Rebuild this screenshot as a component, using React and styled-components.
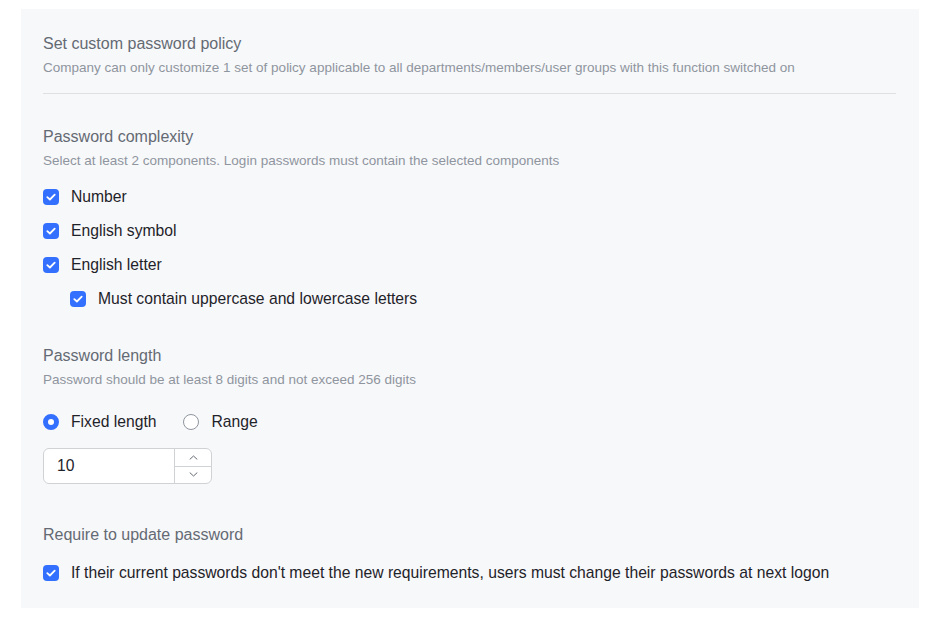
import React, { useState } from 'react';
import styled, { createGlobalStyle } from 'styled-components';

const GlobalStyle = createGlobalStyle`
  body {
    margin: 0;
    background: #ffffff;
    font-family: "Liberation Sans", Arial, sans-serif;
  }
`;

const Page = styled.div`
  padding: 9px 28px 16px 21px;
`;

const Panel = styled.div`
  background: #f7f8fa;
  padding: 24px 23px 18px 22px;
`;

const Header = styled.div`
  padding-bottom: 15px;
  border-bottom: 1px solid #dee0e3;
`;

const Title = styled.div`
  font-size: 16px;
  line-height: 22px;
  color: #646a73;
`;

const Desc = styled.div`
  font-size: 13.5px;
  line-height: 20px;
  color: #8f959e;
  margin-top: 3px;
`;

const Section = styled.div`
  margin-top: ${props => props.gap || 0}px;
`;

const OptionList = styled.div`
  display: flex;
  flex-direction: column;
  margin-top: ${props => props.gap ?? 9}px;
`;

const CheckRow = styled.label`
  display: flex;
  align-items: center;
  gap: 12px;
  height: 34px;
  padding-left: ${props => (props.indent ? 27 : 0)}px;
  font-size: 15.7px;
  color: #1f2329;
  cursor: pointer;
`;

const Box = styled.span`
  width: 16px;
  height: 16px;
  border-radius: 4px;
  flex-shrink: 0;
  display: flex;
  align-items: center;
  justify-content: center;
  background: ${props => (props.checked ? '#3370ff' : '#ffffff')};
  border: ${props => (props.checked ? 'none' : '1px solid #bbbfc4')};
  box-sizing: border-box;
`;

const RadioGroup = styled.div`
  display: flex;
  align-items: center;
  gap: 27px;
  margin-top: 21px;
  height: 22px;
`;

const RadioItem = styled.label`
  display: flex;
  align-items: center;
  gap: 12px;
  font-size: 15.7px;
  color: #1f2329;
  cursor: pointer;
`;

const RadioDot = styled.span`
  width: 16px;
  height: 16px;
  border-radius: 50%;
  box-sizing: border-box;
  background: #ffffff;
  border: ${props => (props.checked ? '5px solid #3370ff' : '1px solid #8f959e')};
`;

const NumberBox = styled.div`
  display: flex;
  width: 169px;
  height: 36px;
  margin-top: 15px;
  box-sizing: border-box;
  border: 1px solid #d0d3d6;
  border-radius: 6px;
  background: #ffffff;
  overflow: hidden;
`;

const NumberValue = styled.div`
  flex: 1;
  display: flex;
  align-items: center;
  padding-left: 13px;
  font-size: 15.7px;
  color: #1f2329;
`;

const Stepper = styled.div`
  width: 36px;
  display: flex;
  flex-direction: column;
  border-left: 1px solid #d0d3d6;
`;

const StepButton = styled.button`
  flex: 1;
  border: none;
  background: transparent;
  padding: 0;
  display: flex;
  align-items: center;
  justify-content: center;
  cursor: pointer;
  & + & {
    border-top: 1px solid #d0d3d6;
  }
`;

const Tick = () => (
  <svg width="10" height="8" viewBox="0 0 10 8" fill="none">
    <path d="M1.3 4.1 3.9 6.5 8.7 1.6" stroke="#fff" strokeWidth="1.8" strokeLinecap="round" strokeLinejoin="round" />
  </svg>
);

const Chevron = ({ up }) => (
  <svg width="9" height="5" viewBox="0 0 9 5" fill="none">
    <path d={up ? 'M1 4.2 4.5 1 8 4.2' : 'M1 0.8 4.5 4 8 0.8'} stroke="#646a73" strokeWidth="1" strokeLinecap="round" strokeLinejoin="round" />
  </svg>
);

const Check = ({ label, checked, indent, onToggle }) => (
  <CheckRow indent={indent} onClick={onToggle}>
    <Box checked={checked}>{checked && <Tick />}</Box>
    {label}
  </CheckRow>
);

export default function App() {
  const [checks, setChecks] = useState({ number: true, symbol: true, letter: true, upper: true, update: true });
  const [mode, setMode] = useState('fixed');
  const [len, setLen] = useState(10);
  const toggle = key => () => setChecks(c => ({ ...c, [key]: !c[key] }));

  return (
    <>
      <GlobalStyle />
      <Page>
        <Panel>
          <Header>
            <Title>Set custom password policy</Title>
            <Desc>Company can only customize 1 set of policy applicable to all departments/members/user groups with this function switched on</Desc>
          </Header>

          <Section gap={32}>
            <Title>Password complexity</Title>
            <Desc>Select at least 2 components. Login passwords must contain the selected components</Desc>
            <OptionList>
              <Check label="Number" checked={checks.number} onToggle={toggle('number')} />
              <Check label="English symbol" checked={checks.symbol} onToggle={toggle('symbol')} />
              <Check label="English letter" checked={checks.letter} onToggle={toggle('letter')} />
              <Check indent label="Must contain uppercase and lowercase letters" checked={checks.upper} onToggle={toggle('upper')} />
            </OptionList>
          </Section>

          <Section gap={29}>
            <Title>Password length</Title>
            <Desc>Password should be at least 8 digits and not exceed 256 digits</Desc>
            <RadioGroup>
              <RadioItem onClick={() => setMode('fixed')}>
                <RadioDot checked={mode === 'fixed'} />
                Fixed length
              </RadioItem>
              <RadioItem onClick={() => setMode('range')}>
                <RadioDot checked={mode === 'range'} />
                Range
              </RadioItem>
            </RadioGroup>
            <NumberBox>
              <NumberValue>{len}</NumberValue>
              <Stepper>
                <StepButton onClick={() => setLen(v => Math.min(256, v + 1))}><Chevron up /></StepButton>
                <StepButton onClick={() => setLen(v => Math.max(8, v - 1))}><Chevron /></StepButton>
              </Stepper>
            </NumberBox>
          </Section>

          <Section gap={40}>
            <Title>Require to update password</Title>
            <OptionList gap={10}>
              <Check label="If their current passwords don't meet the new requirements, users must change their passwords at next logon" checked={checks.update} onToggle={toggle('update')} />
            </OptionList>
          </Section>
        </Panel>
      </Page>
    </>
  );
}
